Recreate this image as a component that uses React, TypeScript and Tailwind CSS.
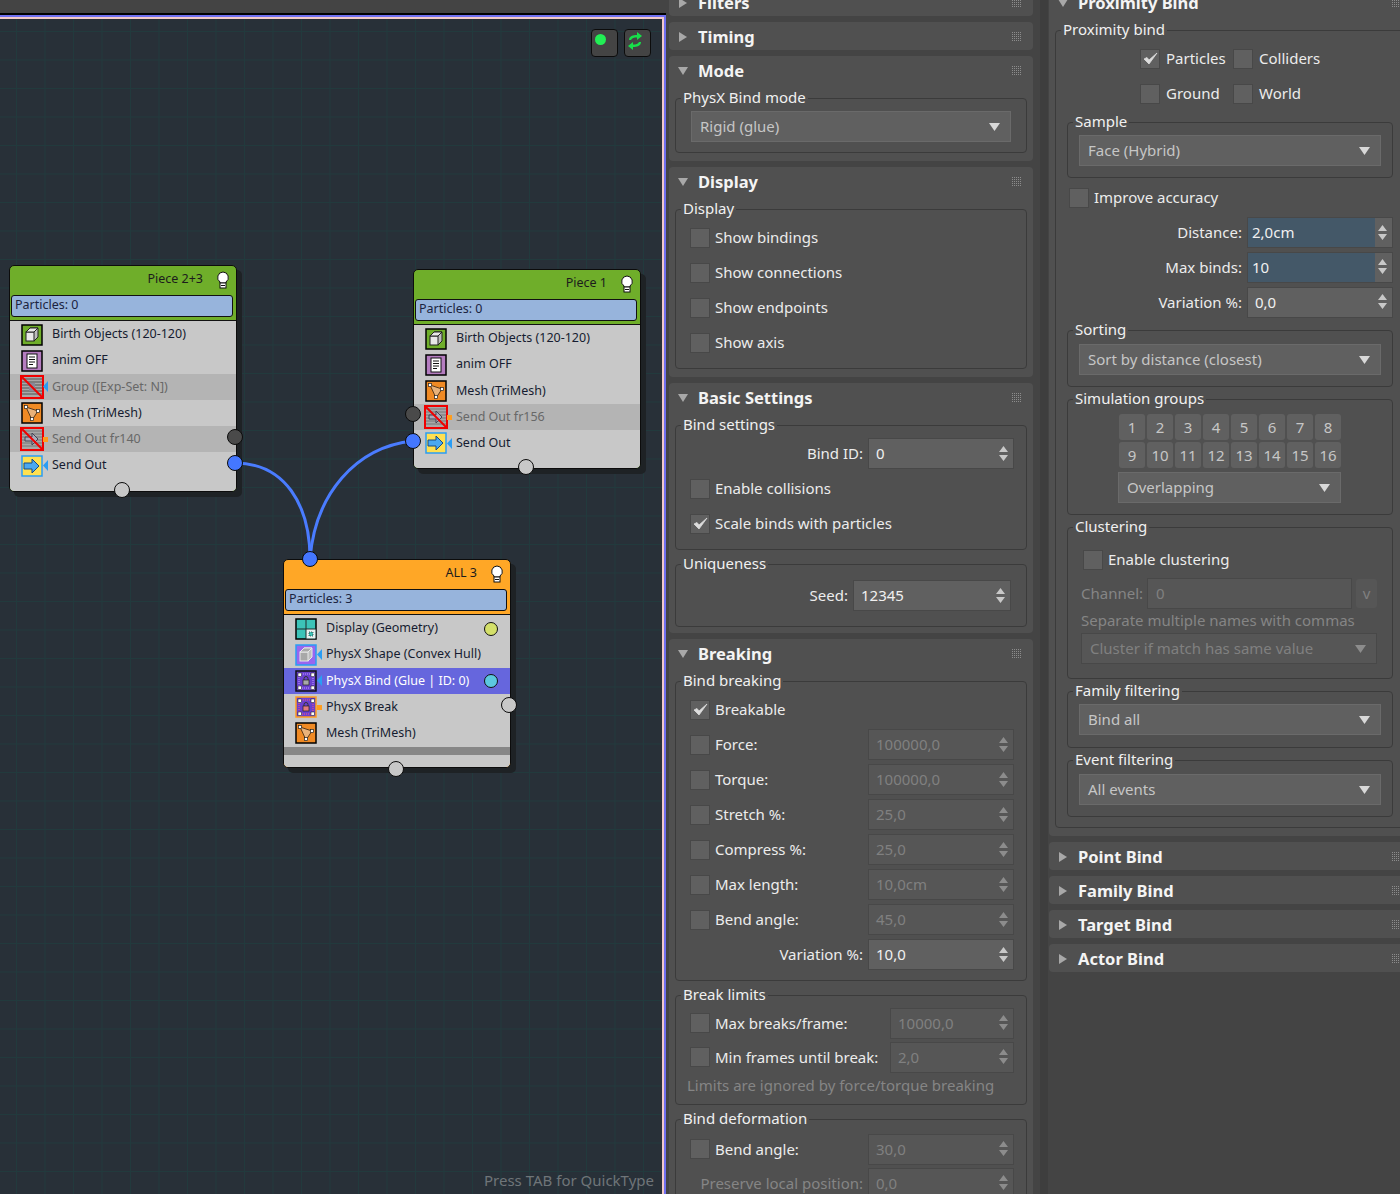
import React from "react";

const Tri = ({ open, cls = "" }: { open?: boolean; cls?: string }) => (
  <svg width="10" height="10" viewBox="0 0 10 10" className={cls}>
    {open ? <path d="M0 1 H10 L5 9 Z" fill="#a8a8a8" /> : <path d="M1 0 L9 5 L1 10 Z" fill="#a8a8a8" />}
  </svg>
);

const Grip = () => (
  <svg width="10" height="10" viewBox="0 0 10 10" className="absolute left-[343px] top-[10px]">
    {[0, 2, 4, 6, 8].flatMap((y) => [0, 2, 4, 6, 8].map((x) => <rect key={`${x}-${y}`} x={x} y={y} width="1" height="1" fill="#8c8c8c" />))}
  </svg>
);

const Rollout = ({ title, open, children, cls = "mb-[6px]" }: { title: string; open?: boolean; children?: React.ReactNode; cls?: string }) => (
  <section className={`relative w-[364px] shrink-0 rounded-[4px] bg-[#505050] ${cls}`}>
    <div className="relative flex h-[28px] items-center pt-px">
      <Tri open={open} cls="ml-[9px] mr-[10px]" />
      <span className="relative top-px text-[16.5px] font-bold leading-none text-[#f4f4f4]">{title}</span>
      <Grip />
    </div>
    {open && <div className="px-[6px] pb-[8px] pt-[3px]">{children}</div>}
  </section>
);

const Group = ({ title, cls = "", inner = "", children }: { title: string; cls?: string; inner?: string; children?: React.ReactNode }) => (
  <fieldset className={`rounded-[4px] border border-[#3b3b3b] ${cls}`}>
    <legend className="ml-[5px] px-[2px] text-[15px] leading-[22px] text-[#f0f0f0]">
      <span className="relative -top-px">{title}</span>
    </legend>
    <div className={inner}>{children}</div>
  </fieldset>
);

const Check = ({ on }: { on?: boolean }) => (
  <span className="flex h-[20px] w-[20px] shrink-0 items-center justify-center border border-[#484848] bg-[#606060]">
    {on && (
      <svg width="15" height="13" viewBox="0 0 15 13">
        <path d="M1 7 L4 5.5 L6 8 L14 1 L6 12 Z" fill="#dcdcdc" stroke="#dcdcdc" strokeWidth=".8" />
      </svg>
    )}
  </span>
);

const CheckRow = ({ label, on, cls = "" }: { label: string; on?: boolean; cls?: string }) => (
  <div className={`flex h-[35px] items-center gap-[5px] text-[15px] text-[#ececec] ${cls}`}>
    <Check on={on} />
    <span>{label}</span>
  </div>
);

const Arrows = ({ fill }: { fill: string }) => (
  <svg width="9" height="16" viewBox="0 0 9 16">
    <path d="M4.5 0 L9 6 H0 Z M0 9 H9 L4.5 15 Z" fill={fill} />
  </svg>
);

const valueStyle = {
  on: "pl-[7px] text-[#f0f0f0]",
  off: "pl-[7px] text-[#808080]",
  blue: "bg-[#445868] pl-[4px] text-[#f0f0f0]",
};

const Spinner = ({ value, w, state }: { value: string; w: string; state: "on" | "off" | "blue" }) => (
  <div className={`flex h-[31px] shrink-0 items-stretch border border-[#484848] ${w} ${state === "off" ? "bg-[#565656]" : "bg-[#606060]"}`}>
    <div className={`flex min-w-0 flex-1 items-center text-[15px] ${valueStyle[state]}`}>{value}</div>
    <div className="flex w-[17px] items-center justify-center pr-[2px]">
      <Arrows fill={state === "off" ? "#8c8c8c" : "#c8c8c8"} />
    </div>
  </div>
);

const SpinRow = ({ label, value, w = "w-[146px]", state = "on", cb, dimLabel, cls = "h-[35px]" }: { label: string; value: string; w?: string; state?: "on" | "off" | "blue"; cb?: boolean; dimLabel?: boolean; cls?: string }) => (
  <div className={`flex items-center text-[15px] ${cls} ${dimLabel ? "text-[#858585]" : "text-[#ececec]"}`}>
    {cb && <Check />}
    <span className={cb ? "ml-[5px] flex-1" : "flex-1 whitespace-nowrap pr-[5px] text-right"}>{label}</span>
    <Spinner value={value} w={w} state={state} />
  </div>
);

const Drop = ({ value, cls, dim }: { value: string; cls: string; dim?: boolean }) => (
  <div className={`flex h-[31px] items-center justify-between border pl-[8px] pr-[10px] text-[15px] ${dim ? "border-[#484848] bg-[#565656] text-[#808080]" : "border-[#6a6a6a] bg-[#606060] text-[#c6c6c6]"} ${cls}`}>
    <span>{value}</span>
    <svg width="11" height="8" viewBox="0 0 11 8">
      <path d="M0 0 H11 L5.5 8 Z" fill={dim ? "#8c8c8c" : "#d8d8d8"} />
    </svg>
  </div>
);

/* ----- node icons ----- */
const Frame = ({ bg, border = "#000", children }: { bg: string; border?: string; children?: React.ReactNode }) => (
  <svg width="22" height="22" viewBox="0 0 22 22" className="shrink-0">
    <rect x="1" y="1" width="20" height="20" fill={bg} stroke={border} strokeWidth="1.5" />
    {children}
  </svg>
);

const Cube = ({ f = "#e8e8e8", s = "#222" }: { f?: string; s?: string }) => (
  <g stroke={s} strokeWidth="1" fill={f}>
    <path d="M5 8 L9 4 H17 V13 L13 17 Z" fill="#bdbdbd" />
    <rect x="5" y="8" width="8" height="9" />
    <path d="M5 8 L9 4 H17 L13 8 Z" fill={f} />
  </g>
);

const MeshMark = () => (
  <g>
    <path d="M5 5 L17 9 L11 18 Z" fill="#e9b27a" stroke="#5a3a1a" strokeWidth="1" />
    <rect x="3.5" y="3.5" width="3" height="3" fill="#fff" stroke="#222" strokeWidth=".7" />
    <rect x="15.5" y="7.5" width="3" height="3" fill="#fff" stroke="#222" strokeWidth=".7" />
    <rect x="9.5" y="15.5" width="3" height="3" fill="#fff" stroke="#222" strokeWidth=".7" />
  </g>
);

const Bind = ({ bg, border, dot }: { bg: string; border: string; dot: string }) => (
  <Frame bg={bg} border={border}>
    <rect x="4" y="4" width="14" height="14" fill="none" stroke={dot} strokeWidth="1" strokeDasharray="1 1" />
    {[3, 16].flatMap((x) => [3, 16].map((y) => <rect key={`${x}${y}`} x={x} y={y} width="3.5" height="3.5" fill="#fff" stroke="#111" strokeWidth=".5" />))}
    <path d="M9 10 V8.5 a2 2 0 0 1 4 0 V10" fill="none" stroke="#333" />
    <rect x="8" y="10" width="6" height="5" fill={dot === "#ff5577" ? "#e07a80" : "#a8a8a8"} stroke="#222" strokeWidth=".7" />
  </Frame>
);

const SendMark = () => (
  <path d="M3 8 H11 V4 L18 11 L11 18 V14 H3 Z" fill="#4aa8f0" stroke="#164a80" strokeWidth="1" />
);

const Icon = ({ k }: { k: string }) => {
  if (k === "birth") return <Frame bg="#6fae2a"><Cube /></Frame>;
  if (k === "anim")
    return (
      <Frame bg="#b57dc0">
        <rect x="6" y="4" width="10" height="14" fill="#fff" stroke="#111" />
        <path d="M8 7 H14 M8 9.5 H14 M8 12 H14 M8 14.5 H12" stroke="#111" strokeWidth="1" />
      </Frame>
    );
  if (k === "mesh") return <Frame bg="#f08a24"><MeshMark /></Frame>;
  if (k === "send") return <Frame bg="#ffe050" border="#2a9df4"><SendMark /></Frame>;
  if (k === "display")
    return (
      <Frame bg="#3cc4b8">
        <rect x="11" y="11" width="9.5" height="9.5" fill="#e8f4f2" />
        <path d="M11 1 V21 M1 11 H21" stroke="#1f2b2b" strokeWidth="1" />
        <rect x="14" y="14" width="4" height="4" fill="#3cc4b8" stroke="#222" strokeWidth=".7" strokeDasharray="1 1" />
      </Frame>
    );
  if (k === "shape") return <Frame bg="#9966ee" border="#2a9df4"><Cube f="#a8a8a8" s="#e8e8e8" /></Frame>;
  if (k === "bind") return <Bind bg="#6a40d0" border="#111" dot="#c0a0ff" />;
  if (k === "break") return <Bind bg="#6a40d0" border="#ff9d1e" dot="#ff5577" />;
  if (k === "xgroup" || k === "xsend")
    return (
      <svg width="24" height="24" viewBox="0 0 24 24" className="-mx-px shrink-0">
        <rect x="1" y="1" width="22" height="22" fill="#a8a8a8" />
        {[4, 7, 10, 13, 16, 19].map((y) => <path key={y} d={`M2 ${y} H22`} stroke={k === "xgroup" ? "#555" : "#777"} strokeWidth="1" />)}
        {k === "xsend" ? <path d="M5 10 H12 V6 L18 12 L12 18 V14 H5 Z" fill="#aab" stroke="#445" /> : <rect x="9" y="8" width="6" height="8" fill="#889" />}
        <path d="M2 2 L22 22" stroke="#f00000" strokeWidth="2" />
        <rect x="1" y="1" width="22" height="22" fill="none" stroke="#f00000" strokeWidth="2" />
      </svg>
    );
  return null;
};

const Bulb = () => (
  <svg width="14" height="18" viewBox="0 0 14 18">
    <path d="M7 1 a5.5 5.5 0 0 1 3 10 V12 H4 V11 A5.5 5.5 0 0 1 7 1 Z" fill="#fff" stroke="#111" strokeWidth="1" />
    <rect x="4" y="12" width="6" height="5" fill="#fff" stroke="#111" strokeWidth="1" />
    <path d="M5 14.5 H9" stroke="#111" />
  </svg>
);

type Row = { k: string; label: string; mode?: "x" | "sel"; flag?: "blue" | "orange"; dot?: string };

const Node = ({ pos, color, title, particles, rows, extra }: { pos: string; color: string; title: string; particles: string; rows: Row[]; extra?: boolean }) => (
  <div className={`absolute w-[228px] overflow-hidden rounded-[5px] border-[1.5px] border-[#0c0c0c] shadow-[5px_5px_0_#1e2225] ${color} ${pos}`}>
    <div className="flex h-[28px] items-center justify-end gap-[13px] pr-[6px] text-[12.5px] text-[#1c1c1c]">
      <span>{title}</span>
      <Bulb />
    </div>
    <div className="ml-px mr-[3px] mt-px flex h-[22px] items-center rounded-[3px] border border-[#111] bg-[#97b4dc] pl-[3px] text-[12.5px] text-[#1c2440]">{particles}</div>
    <div className="mt-[3px] rounded-b-[3px] border-t border-[#111] bg-[#c8c8c8] pb-[12px] pt-[1px]">
      {rows.map((r) => (
        <div key={r.label} className={`relative flex h-[26.2px] items-center pl-[11px] text-[12.5px] ${r.mode === "x" ? "bg-[#b4b4b4] text-[#686868]" : r.mode === "sel" ? "bg-[#6666dd] text-white" : "text-[#161c30]"}`}>
          <span className="flex w-[22px] justify-center">
            <Icon k={r.k} />
          </span>
          {r.flag === "blue" && (
            <svg width="5" height="11" viewBox="0 0 5 11" className="absolute left-[33px]">
              <path d="M5 0 V11 L0 5.5 Z" fill="#2a9df4" />
            </svg>
          )}
          {r.flag === "orange" && <span className="absolute left-[33px] h-[5px] w-[5px] bg-[#ff9d1e]" />}
          <span className="ml-[9px]">{r.label}</span>
          {r.dot && <span className={`absolute right-[12px] h-[14px] w-[14px] rounded-full border border-[#111] ${r.dot}`} />}
        </div>
      ))}
      {extra && <div className="mt-[1px] h-[8px] bg-[#878787]" />}
    </div>
  </div>
);

const Port = ({ cls }: { cls: string }) => <span className={`absolute z-10 h-[16px] w-[16px] rounded-full border border-[#0c0c0c] ${cls}`} />;

const Canvas = () => (
  <div className="flex w-[666px] shrink-0 flex-col">
    <div className="h-[13px] bg-[#444444]" />
    <div className="h-[1.5px] bg-black" />
    <div className="relative flex-1 overflow-hidden border-r-[2px] border-t-[2.5px] border-[#6f6ff0]">
      <div className="relative h-full border-r-[2px] border-t-[2px] border-[#f2c9c9] bg-[#283038] bg-[linear-gradient(to_right,#223a3d_1px,transparent_1px),linear-gradient(to_bottom,#223a3d_1px,transparent_1px)] bg-[size:28.5px_28.5px] bg-[position:16px_12px]">
        <svg width="662" height="1175" className="absolute left-0 top-0 z-[1]">
          <g transform="translate(0,-19)">
            <path d="M235 463 C 285 463 310 505 310 559" fill="none" stroke="#4a7cff" strokeWidth="3" />
            <path d="M413 441 C 355 447 315 495 310 559" fill="none" stroke="#4a7cff" strokeWidth="3" />
          </g>
        </svg>
        <Node
          pos="left-[9px] top-[246px]"
          color="bg-[#6fae2a]"
          title="Piece 2+3"
          particles="Particles: 0"
          rows={[
            { k: "birth", label: "Birth Objects (120-120)" },
            { k: "anim", label: "anim OFF" },
            { k: "xgroup", label: "Group ([Exp-Set: N])", mode: "x", flag: "blue" },
            { k: "mesh", label: "Mesh (TriMesh)" },
            { k: "xsend", label: "Send Out fr140", mode: "x", flag: "orange" },
            { k: "send", label: "Send Out", flag: "blue" },
          ]}
        />
        <Node
          pos="left-[413px] top-[250px]"
          color="bg-[#6fae2a]"
          title="Piece 1"
          particles="Particles: 0"
          rows={[
            { k: "birth", label: "Birth Objects (120-120)" },
            { k: "anim", label: "anim OFF" },
            { k: "mesh", label: "Mesh (TriMesh)" },
            { k: "xsend", label: "Send Out fr156", mode: "x", flag: "orange" },
            { k: "send", label: "Send Out", flag: "blue" },
          ]}
        />
        <Node
          pos="left-[283px] top-[540px]"
          color="bg-[#ffa726]"
          title="ALL 3"
          particles="Particles: 3"
          extra
          rows={[
            { k: "display", label: "Display (Geometry)", dot: "bg-[#d4e06a]" },
            { k: "shape", label: "PhysX Shape (Convex Hull)", flag: "blue" },
            { k: "bind", label: "PhysX Bind (Glue | ID: 0)", mode: "sel", flag: "blue", dot: "bg-[#5cc8e0]" },
            { k: "break", label: "PhysX Break", flag: "orange" },
            { k: "mesh", label: "Mesh (TriMesh)" },
          ]}
        />
        <Port cls="left-[114px] top-[463px] bg-[#c8c8c8]" />
        <Port cls="left-[227px] top-[410px] bg-[#4a4a4a]" />
        <Port cls="left-[227px] top-[436px] bg-[#4477ff]" />
        <Port cls="left-[518px] top-[440px] bg-[#c8c8c8]" />
        <Port cls="left-[405px] top-[387px] bg-[#4a4a4a]" />
        <Port cls="left-[405px] top-[414px] bg-[#4477ff]" />
        <Port cls="left-[302px] top-[532px] bg-[#4477ff]" />
        <Port cls="left-[501px] top-[678px] bg-[#c8c8c8]" />
        <Port cls="left-[388px] top-[742px] bg-[#c8c8c8]" />

        <div className="absolute left-[591px] top-[10px] flex h-[28px] w-[27px] items-start justify-start rounded-[4px] border border-[#0c0c0c] bg-[#444444] pl-[3px] pt-[4px]">
          <span className="h-[11px] w-[11px] rounded-full bg-[#22ee55]" />
        </div>
        <div className="absolute left-[624px] top-[10px] flex h-[28px] w-[27px] items-start justify-start rounded-[4px] border border-[#0c0c0c] bg-[#444444] pl-[2px] pt-[1px]">
          <svg width="16" height="20" viewBox="0 0 16 20">
            <path d="M2 9 C2 5 6 4 10 4 V1 L15 5 L10 9 V6.5 C7 6.5 5 7 4 9 Z" fill="#17e04a" />
            <path d="M14 11 C14 15 10 16 6 16 V19 L1 15 L6 11 V13.5 C9 13.5 11 13 12 11 Z" fill="#17e04a" />
          </svg>
        </div>
        <div className="absolute bottom-[3px] right-[8px] text-[15px] text-[#6f7579]">Press TAB for QuickType</div>
      </div>
    </div>
  </div>
);

const LeftPanel = () => (
  <div className="-mt-[12px] w-[374px] shrink-0 pl-[3px]">
    <Rollout title="Filters" />
    <Rollout title="Timing" />
    <Rollout title="Mode" open>
      <Group title="PhysX Bind mode" inner="px-[15px] pb-[10px]">
        <Drop value="Rigid (glue)" cls="mt-[2px] w-[320px]" />
      </Group>
    </Rollout>
    <Rollout title="Display" open>
      <Group title="Display" inner="pb-[8px] pl-[14px]">
        <CheckRow label="Show bindings" />
        <CheckRow label="Show connections" />
        <CheckRow label="Show endpoints" />
        <CheckRow label="Show axis" />
      </Group>
    </Rollout>
    <Rollout title="Basic Settings" open>
      <Group title="Bind settings" inner="pb-[8px] pl-[14px] pr-[12px]">
        <SpinRow label="Bind ID:" value="0" />
        <CheckRow label="Enable collisions" />
        <CheckRow label="Scale binds with particles" on />
      </Group>
      <Group title="Uniqueness" cls="mt-[3px] -mb-[2px]" inner="pb-[13px] pl-[14px] pr-[15px] pt-[3px]">
        <SpinRow label="Seed:" value="12345" w="w-[158px]" />
      </Group>
    </Rollout>
    <Rollout title="Breaking" open cls="mb-0">
      <Group title="Bind breaking" inner="pb-[8px] pl-[14px] pr-[12px]">
        <CheckRow label="Breakable" on />
        <SpinRow cb label="Force:" value="100000,0" state="off" />
        <SpinRow cb label="Torque:" value="100000,0" state="off" />
        <SpinRow cb label="Stretch %:" value="25,0" state="off" />
        <SpinRow cb label="Compress %:" value="25,0" state="off" />
        <SpinRow cb label="Max length:" value="10,0cm" state="off" />
        <SpinRow cb label="Bend angle:" value="45,0" state="off" />
        <SpinRow label="Variation %:" value="10,0" />
      </Group>
      <Group title="Break limits" cls="mt-[3px]" inner="pb-[8px] pl-[14px] pr-[12px]">
        <SpinRow cb label="Max breaks/frame:" value="10000,0" w="w-[124px]" state="off" cls="h-[34px]" />
        <SpinRow cb label="Min frames until break:" value="2,0" w="w-[124px]" state="off" cls="h-[34px]" />
        <p className="-ml-[3px] whitespace-nowrap text-[15px] leading-[22px] text-[#858585]">Limits are ignored by force/torque breaking</p>
      </Group>
      <Group title="Bind deformation" cls="mt-[3px]" inner="pb-[8px] pl-[14px] pr-[12px] pt-[2px]">
        <SpinRow cb label="Bend angle:" value="30,0" state="off" cls="h-[34px]" />
        <SpinRow dimLabel label="Preserve local position:" value="0,0" state="off" cls="h-[34px]" />
      </Group>
    </Rollout>
  </div>
);

const Pair = ({ a, b, on }: { a: string; b: string; on?: boolean }) => (
  <div className="flex h-[35px] items-center pl-[73px] text-[15px] text-[#ececec]">
    <div className="flex w-[93px] items-center gap-[6px]">
      <Check on={on} />
      <span>{a}</span>
    </div>
    <div className="flex items-center gap-[6px]">
      <Check />
      <span>{b}</span>
    </div>
  </div>
);

const NumBtn = ({ n }: { n: number }) => (
  <span className="flex h-[26px] w-[26px] items-center justify-center rounded-[3px] bg-[#606060] text-[15px] text-[#c6c6c6]">{n}</span>
);

const RightPanel = () => (
  <div className="-mt-[12px] flex-1 overflow-hidden bg-[#444444]">
    <div className="w-[364px] pl-px">
      <Rollout title="Proximity Bind" open>
        <Group title="Proximity bind" cls="h-[809px] w-[351px]" inner="pl-[11px]">
          <Pair a="Particles" b="Colliders" on />
          <Pair a="Ground" b="World" />
          <div className="w-[326px]">
            <Group title="Sample" inner="px-[11px] pb-[11px]">
              <Drop value="Face (Hybrid)" cls="mt-[2px]" />
            </Group>
            <CheckRow label="Improve accuracy" cls="ml-[2px] mt-[2px]" />
            <div className="text-[#ececec]">
              <SpinRow label="Distance:" value="2,0cm" state="blue" />
              <SpinRow label="Max binds:" value="10" state="blue" cls="h-[34px]" />
              <SpinRow label="Variation %:" value="0,0" cls="h-[36px]" />
            </div>
            <Group title="Sorting" cls="-mt-px" inner="px-[11px] pb-[11px]">
              <Drop value="Sort by distance (closest)" cls="mt-[3px]" />
            </Group>
            <Group title="Simulation groups" cls="mt-px" inner="pb-[11px] pl-[50px]">
              <div className="ml-px mt-[4px] grid w-[222px] grid-cols-[repeat(8,26px)] gap-[2px]">
                {Array.from({ length: 16 }, (_, i) => (
                  <NumBtn key={i} n={i + 1} />
                ))}
              </div>
              <Drop value="Overlapping" cls="mt-[4px] w-[223px]" />
            </Group>
            <Group title="Clustering" cls="mt-px" inner="pb-[14px] pl-[13px] pr-[14px] pt-[4px]">
              <CheckRow label="Enable clustering" cls="ml-[2px]" />
              <div className="mt-px flex items-center gap-[4px] text-[15px] text-[#858585]">
                <span className="w-[62px]">Channel:</span>
                <span className="flex h-[31px] w-[205px] items-center border border-[#484848] bg-[#565656] pl-[8px] text-[15px] text-[#808080]">0</span>
                <span className="flex h-[29px] w-[21px] items-center justify-center rounded-[3px] bg-[#565656] text-[#808080]">v</span>
              </div>
              <p className="whitespace-nowrap text-[15px] leading-[22px] text-[#858585]">Separate multiple names with commas</p>
              <Drop dim value="Cluster if match has same value" cls="mt-[2px] w-[296px]" />
            </Group>
            <Group title="Family filtering" cls="mt-px" inner="px-[11px] pb-[12px]">
              <Drop value="Bind all" cls="mt-[2px]" />
            </Group>
            <Group title="Event filtering" cls="mt-px" inner="px-[11px] pb-[11px]">
              <Drop value="All events" cls="mt-[3px]" />
            </Group>
          </div>
        </Group>
      </Rollout>
      <Rollout title="Point Bind" />
      <Rollout title="Family Bind" />
      <Rollout title="Target Bind" />
      <Rollout title="Actor Bind" />
    </div>
  </div>
);

export default function App() {
  return (
    <div className="flex h-[1194px] w-[1400px] overflow-hidden bg-[#444444] [font-family:'Noto_Sans',sans-serif]">
      <Canvas />
      <LeftPanel />
      <div className="w-[8px] shrink-0 bg-[#3e3e3e]" />
      <RightPanel />
    </div>
  );
}
